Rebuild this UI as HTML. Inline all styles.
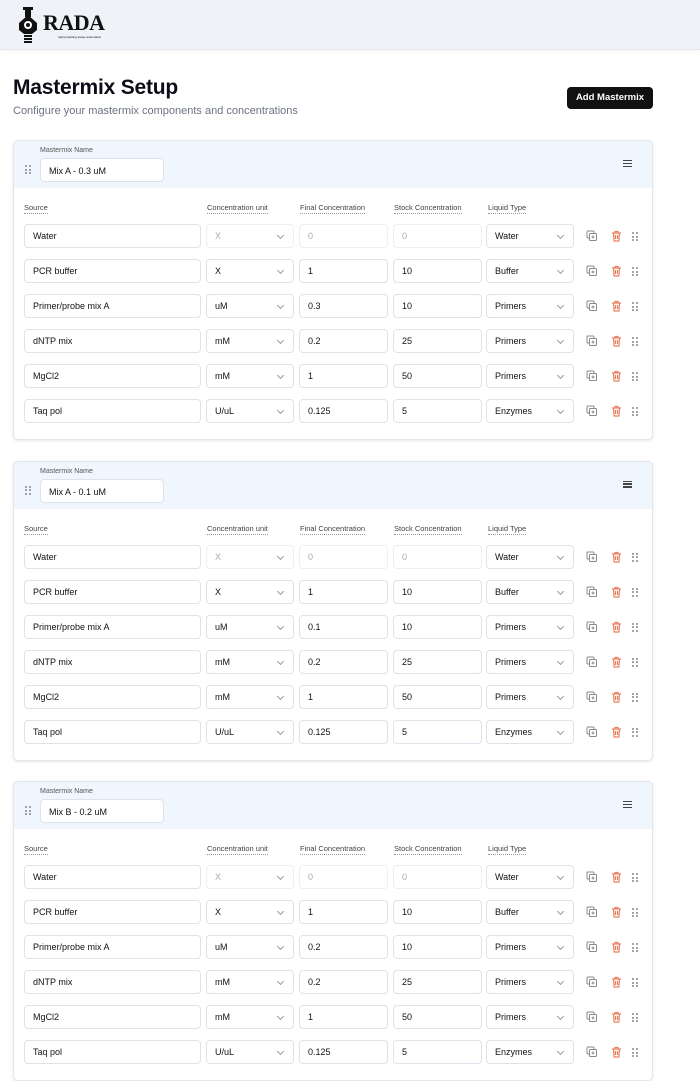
<!DOCTYPE html>
<html><head><meta charset="utf-8"><style>
*{box-sizing:border-box;margin:0;padding:0}
body{width:700px;height:867px;overflow:hidden;background:#fff;font-family:"Liberation Sans",sans-serif;position:relative;color:#111}
.hdr{position:absolute;left:0;top:0;width:700px;height:50px;background:#eff2f7;border-bottom:1px solid #e3e6eb;box-shadow:0 1px 3px rgba(0,0,0,.06)}
.logo{position:absolute;left:14px;top:6px}
.logo b{position:absolute;left:29px;top:4px;font-family:"Liberation Serif",serif;font-size:22px;font-weight:900;letter-spacing:-0.5px}
.logo i{position:absolute;left:44px;top:29px;font-size:3px;font-style:normal;white-space:nowrap}
h1{position:absolute;left:13px;top:76px;font-size:21px;font-weight:700;color:#0d0d1a;letter-spacing:-0.2px}
.sub{position:absolute;left:13px;top:105px;font-size:11px;color:#6b7280}
.btn{position:absolute;left:567px;top:87px;width:86px;height:22px;background:#111;color:#fff;border-radius:4px;font-size:9.5px;font-weight:700;text-align:center;line-height:22px}
.card{position:absolute;left:13px;width:640px;height:300px;border:1px solid #e3e6ea;border-radius:5px;box-shadow:0 1px 3px rgba(0,0,0,.1);background:#fff;overflow:hidden}
.ch{position:absolute;left:0;top:0;width:100%;height:47px;background:#f0f6fd}
.nl{position:absolute;left:26px;top:6px;font-size:7px;color:#555}
.ni{position:absolute;left:26px;top:17px;width:124px;height:24px;background:#fff;border:1px solid #dde3ea;border-radius:4px;font-size:9px;padding:7px 8px}
.grip{position:absolute;width:6px;height:10px}
.grip span{position:absolute;width:2px;height:2px;background:#888;border-radius:1px}
.ham{position:absolute;left:609px;top:19px;width:9px}
.ham span{display:block;height:1.3px;background:#444;margin-bottom:1.7px}
.lb{position:absolute;top:62px;font-size:7.5px;color:#444;border-bottom:1px dotted #999;padding-bottom:1px}
.f{position:absolute;height:24px;border:1px solid #dde3ea;border-radius:4px;font-size:9px;padding:6px 8px;background:#fff;color:#111}
.f.dis{color:#aaa;border-color:#eceff2}
.sel::after{content:"";position:absolute;right:10px;top:8px;width:4px;height:4px;border-right:1px solid #999;border-bottom:1px solid #999;transform:rotate(45deg)}
.ic{position:absolute}
</style></head><body>
<div class="hdr"><div class="logo">
<svg width="28" height="38" viewBox="0 0 28 38"><rect x="9" y="1" width="10" height="3" fill="#111"/><rect x="11" y="4" width="6" height="7" fill="#111"/><path d="M14 9 L5 17 L5 24 L10 28 L18 28 L23 24 L23 17 Z" fill="#111"/><circle cx="14" cy="19" r="4" fill="#fff"/><circle cx="14" cy="19" r="2" fill="#111"/><rect x="10" y="29" width="8" height="2" fill="#111"/><rect x="10" y="32" width="8" height="2" fill="#111"/><rect x="10" y="35" width="8" height="2" fill="#111"/></svg>
<b>RADA</b><i>rapid pipetting assay automation</i></div></div>
<h1>Mastermix Setup</h1>
<div class="sub">Configure your mastermix components and concentrations</div>
<div class="btn">Add Mastermix</div>
<div id="cards"></div>
<script>
const data=[["Mix A - 0.3 uM","0.3"],["Mix A - 0.1 uM","0.1"],["Mix B - 0.2 uM","0.2"]];
const rows=[["Water","X","0","0","Water",1],["PCR buffer","X","1","10","Buffer"],["Primer/probe mix A","uM","P","10","Primers"],["dNTP mix","mM","0.2","25","Primers"],["MgCl2","mM","1","50","Primers"],["Taq pol","U/uL","0.125","5","Enzymes"]];
function grip(x,y){let s='<div class="grip" style="left:'+x+'px;top:'+y+'px">';for(let r=0;r<3;r++)for(let c=0;c<2;c++)s+='<span style="left:'+c*3.5+'px;top:'+r*3.5+'px"></span>';return s+'</div>'}
let h='';
data.forEach((d,i)=>{
 const top=140+i*320.5;
 h+='<div class="card" style="top:'+top+'px"><div class="ch"><div class="nl">Mastermix Name</div>'+grip(11,24)+'<div class="ni">'+d[0]+'</div><div class="ham"><span></span><span></span><span></span></div></div>';
 [["Source",10],["Concentration unit",193],["Final Concentration",286],["Stock Concentration",380],["Liquid Type",474]].forEach(l=>h+='<div class="lb" style="left:'+l[1]+'px">'+l[0]+'</div>');
 rows.forEach((r,j)=>{const y=83+j*35;const dis=r[5]?' dis':'';const fin=r[2]=="P"?d[1]:r[2];
  h+='<div class="f" style="left:10px;top:'+y+'px;width:177px">'+r[0]+'</div>';
  h+='<div class="f sel'+dis+'" style="left:192px;top:'+y+'px;width:88px">'+r[1]+'</div>';
  h+='<div class="f'+dis+'" style="left:285px;top:'+y+'px;width:89px">'+fin+'</div>';
  h+='<div class="f'+dis+'" style="left:379px;top:'+y+'px;width:89px">'+r[3]+'</div>';
  h+='<div class="f sel" style="left:472px;top:'+y+'px;width:88px">'+r[4]+'</div>';
  h+='<svg class="ic" style="left:572px;top:'+(y+6)+'px" width="12" height="12" viewBox="0 0 12 12" fill="none" stroke="#888" stroke-width="1"><rect x="1" y="1" width="7" height="7" rx="1"/><rect x="3.5" y="3.5" width="7" height="7" rx="1" fill="#fff"/><path d="M7 5.5v3M5.5 7h3"/></svg>';
  h+='<svg class="ic" style="left:597px;top:'+(y+6)+'px" width="11" height="12" viewBox="0 0 11 12" fill="none" stroke="#e8805f" stroke-width="1.2"><path d="M1 3h9M4 3V1.5h3V3M2.5 3l.6 8h4.8l.6-8M4.5 5v4M6.5 5v4"/></svg>';
  h+=grip(618,y+8);
 });
 h+='</div>';
});
document.getElementById('cards').innerHTML=h;
</script>
</body></html>
